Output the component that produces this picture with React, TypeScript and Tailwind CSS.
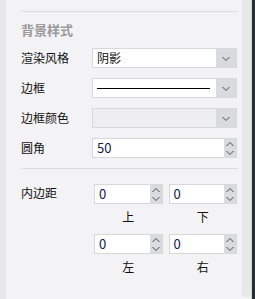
import React from 'react';

const font = { fontFamily: '"Noto Sans CJK SC", "Microsoft YaHei", sans-serif' };

function Chevron({ up = false }: { up?: boolean }) {
  return (
    <svg width="8" height="5" viewBox="0 0 8 5" className="block">
      <path d={up ? 'M0.5 4 L4 0.5 L7.5 4' : 'M0.5 1 L4 4.5 L7.5 1'} fill="none" stroke="#4a4a4a" strokeWidth="1" />
    </svg>
  );
}

function Select({ children, disabled = false }: { children?: React.ReactNode; disabled?: boolean }) {
  return (
    <div className={`flex h-[20px] w-[145px] border border-[#d8d8da] ${disabled ? 'bg-[#eeeef0]' : 'bg-white'}`}>
      <div className="flex flex-1 items-center pl-[4px] pr-[6px] text-[12px] text-[#111]">{children}</div>
      <div className="flex w-[20px] items-center justify-center bg-[#dadbdf]">
        <Chevron />
      </div>
    </div>
  );
}

function Spin({ value, w }: { value: string; w: string }) {
  return (
    <div className={`flex h-[20px] ${w} border border-[#d8d8da] bg-white`}>
      <div className="flex flex-1 items-center pl-[4px] text-[13px] text-[#10204a]">{value}</div>
      <div className="flex w-[12px] flex-col items-center justify-center gap-[3px] bg-[#dadbdf]">
        <Chevron up />
        <Chevron />
      </div>
    </div>
  );
}

function Row({ label, children }: { label: string; children: React.ReactNode }) {
  return (
    <div className="flex h-[20px] items-center">
      <div className="w-[71px] text-[12px] text-[#111]">{label}</div>
      {children}
    </div>
  );
}

export default function App() {
  return (
    <div className="flex h-[299px] w-[255px] overflow-hidden bg-[#f3f3f5]" style={font}>
      <div className="w-[6px] bg-[#e8e8e8]" />
      <div className="flex-1 pl-[15px] pr-[4px]">
        <div className="h-[11px]" />
        <div className="border-t border-[#dcdcde]" />
        {/* 背景样式 */}
        <div className="flex h-[36px] items-center text-[13px] font-bold text-[#9a9a9a]">背景样式</div>
        <div className="flex flex-col gap-[10px]">
          <Row label="渲染风格">
            <Select>阴影</Select>
          </Row>
          <Row label="边框">
            <Select>
              <div className="h-px w-full bg-black" />
            </Select>
          </Row>
          <Row label="边框颜色">
            <Select disabled />
          </Row>
          <Row label="圆角">
            <Spin value="50" w="w-[145px]" />
          </Row>
        </div>
        <div className="mt-[10px] border-t border-[#dcdcde]" />
        {/* 内边距 */}
        <div className="flex pt-[15px]">
          <div className="w-[73px] pt-[1px] text-[12px] leading-[16px] text-[#111]">内边距</div>
          <div className="grid w-[143px] grid-cols-2 gap-x-[6px]">
            {['上', '下', '左', '右'].map((t) => (
              <div key={t} className="flex flex-col">
                <Spin value="0" w="w-full" />
                <div className="h-[30px] pt-[5px] text-center text-[12px] leading-[16px] text-[#111]">{t}</div>
              </div>
            ))}
          </div>
        </div>
      </div>
      <div className="flex w-[9px] flex-col">
        <div className="h-[297px] rounded-b-[4px] bg-[#e8e8e8]" />
      </div>
      <div className="w-[1px] bg-[#d4d4d6]" />
      <div className="w-[3px] bg-[#263033]" />
    </div>
  );
}
